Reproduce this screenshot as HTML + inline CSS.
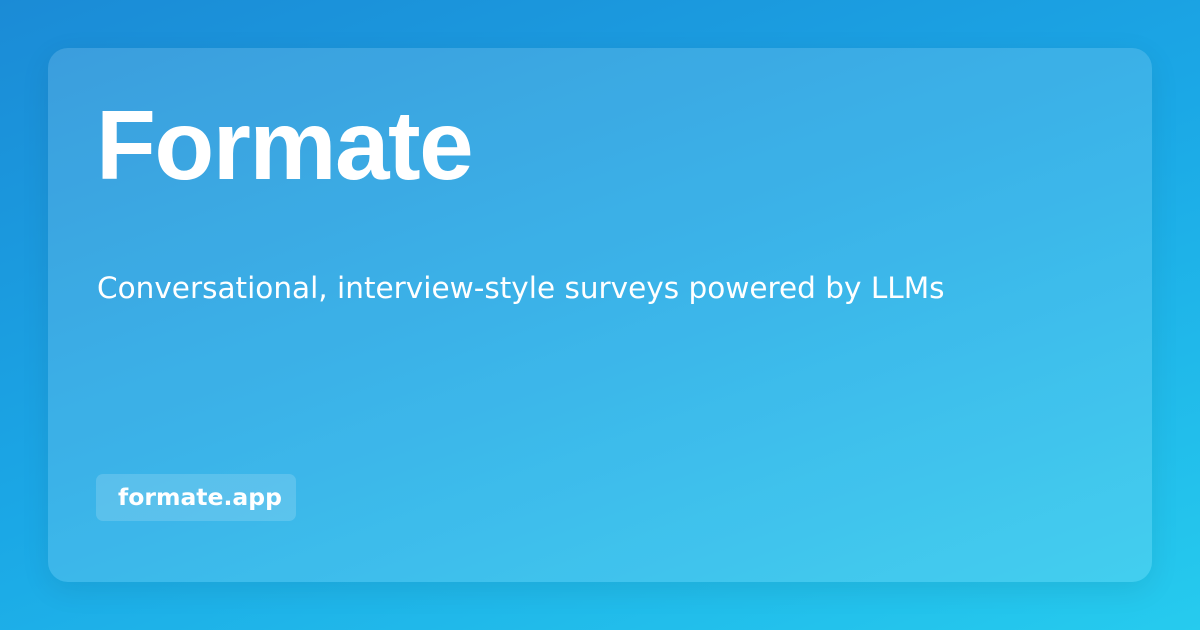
<!DOCTYPE html>
<html><head><meta charset="utf-8"><style>
html,body{margin:0;padding:0}
body{width:1200px;height:630px;overflow:hidden;background:linear-gradient(160deg,#1b8bd6 0%,#1ba8e6 50%,#26cbee 100%);font-family:"Liberation Sans",sans-serif;position:relative}
.card{position:absolute;left:48px;top:48px;width:1104px;height:534px;border-radius:20px;background:rgba(255,255,255,0.14);box-shadow:0 8px 30px rgba(0,0,0,0.08)}
h1{position:absolute;left:96px;top:85px;margin:0;font-size:98px;font-weight:bold;color:#fff;letter-spacing:-1.5px;line-height:120px}
.sub{position:absolute;left:97px;top:270px;font-family:"DejaVu Sans",sans-serif;font-size:29.5px;color:#fff;line-height:36px;white-space:nowrap}
.pill{position:absolute;left:96px;top:474px;width:200px;height:47px;border-radius:7px;background:rgba(255,255,255,0.16);color:#fff;font-family:"DejaVu Sans",sans-serif;font-weight:bold;font-size:23.5px;line-height:47px;box-sizing:border-box;padding-left:22px;white-space:nowrap}
</style></head><body>
<div class="card"></div>
<h1>Formate</h1>
<div class="sub">Conversational, interview-style surveys powered by LLMs</div>
<div class="pill">formate.app</div>
</body></html>
